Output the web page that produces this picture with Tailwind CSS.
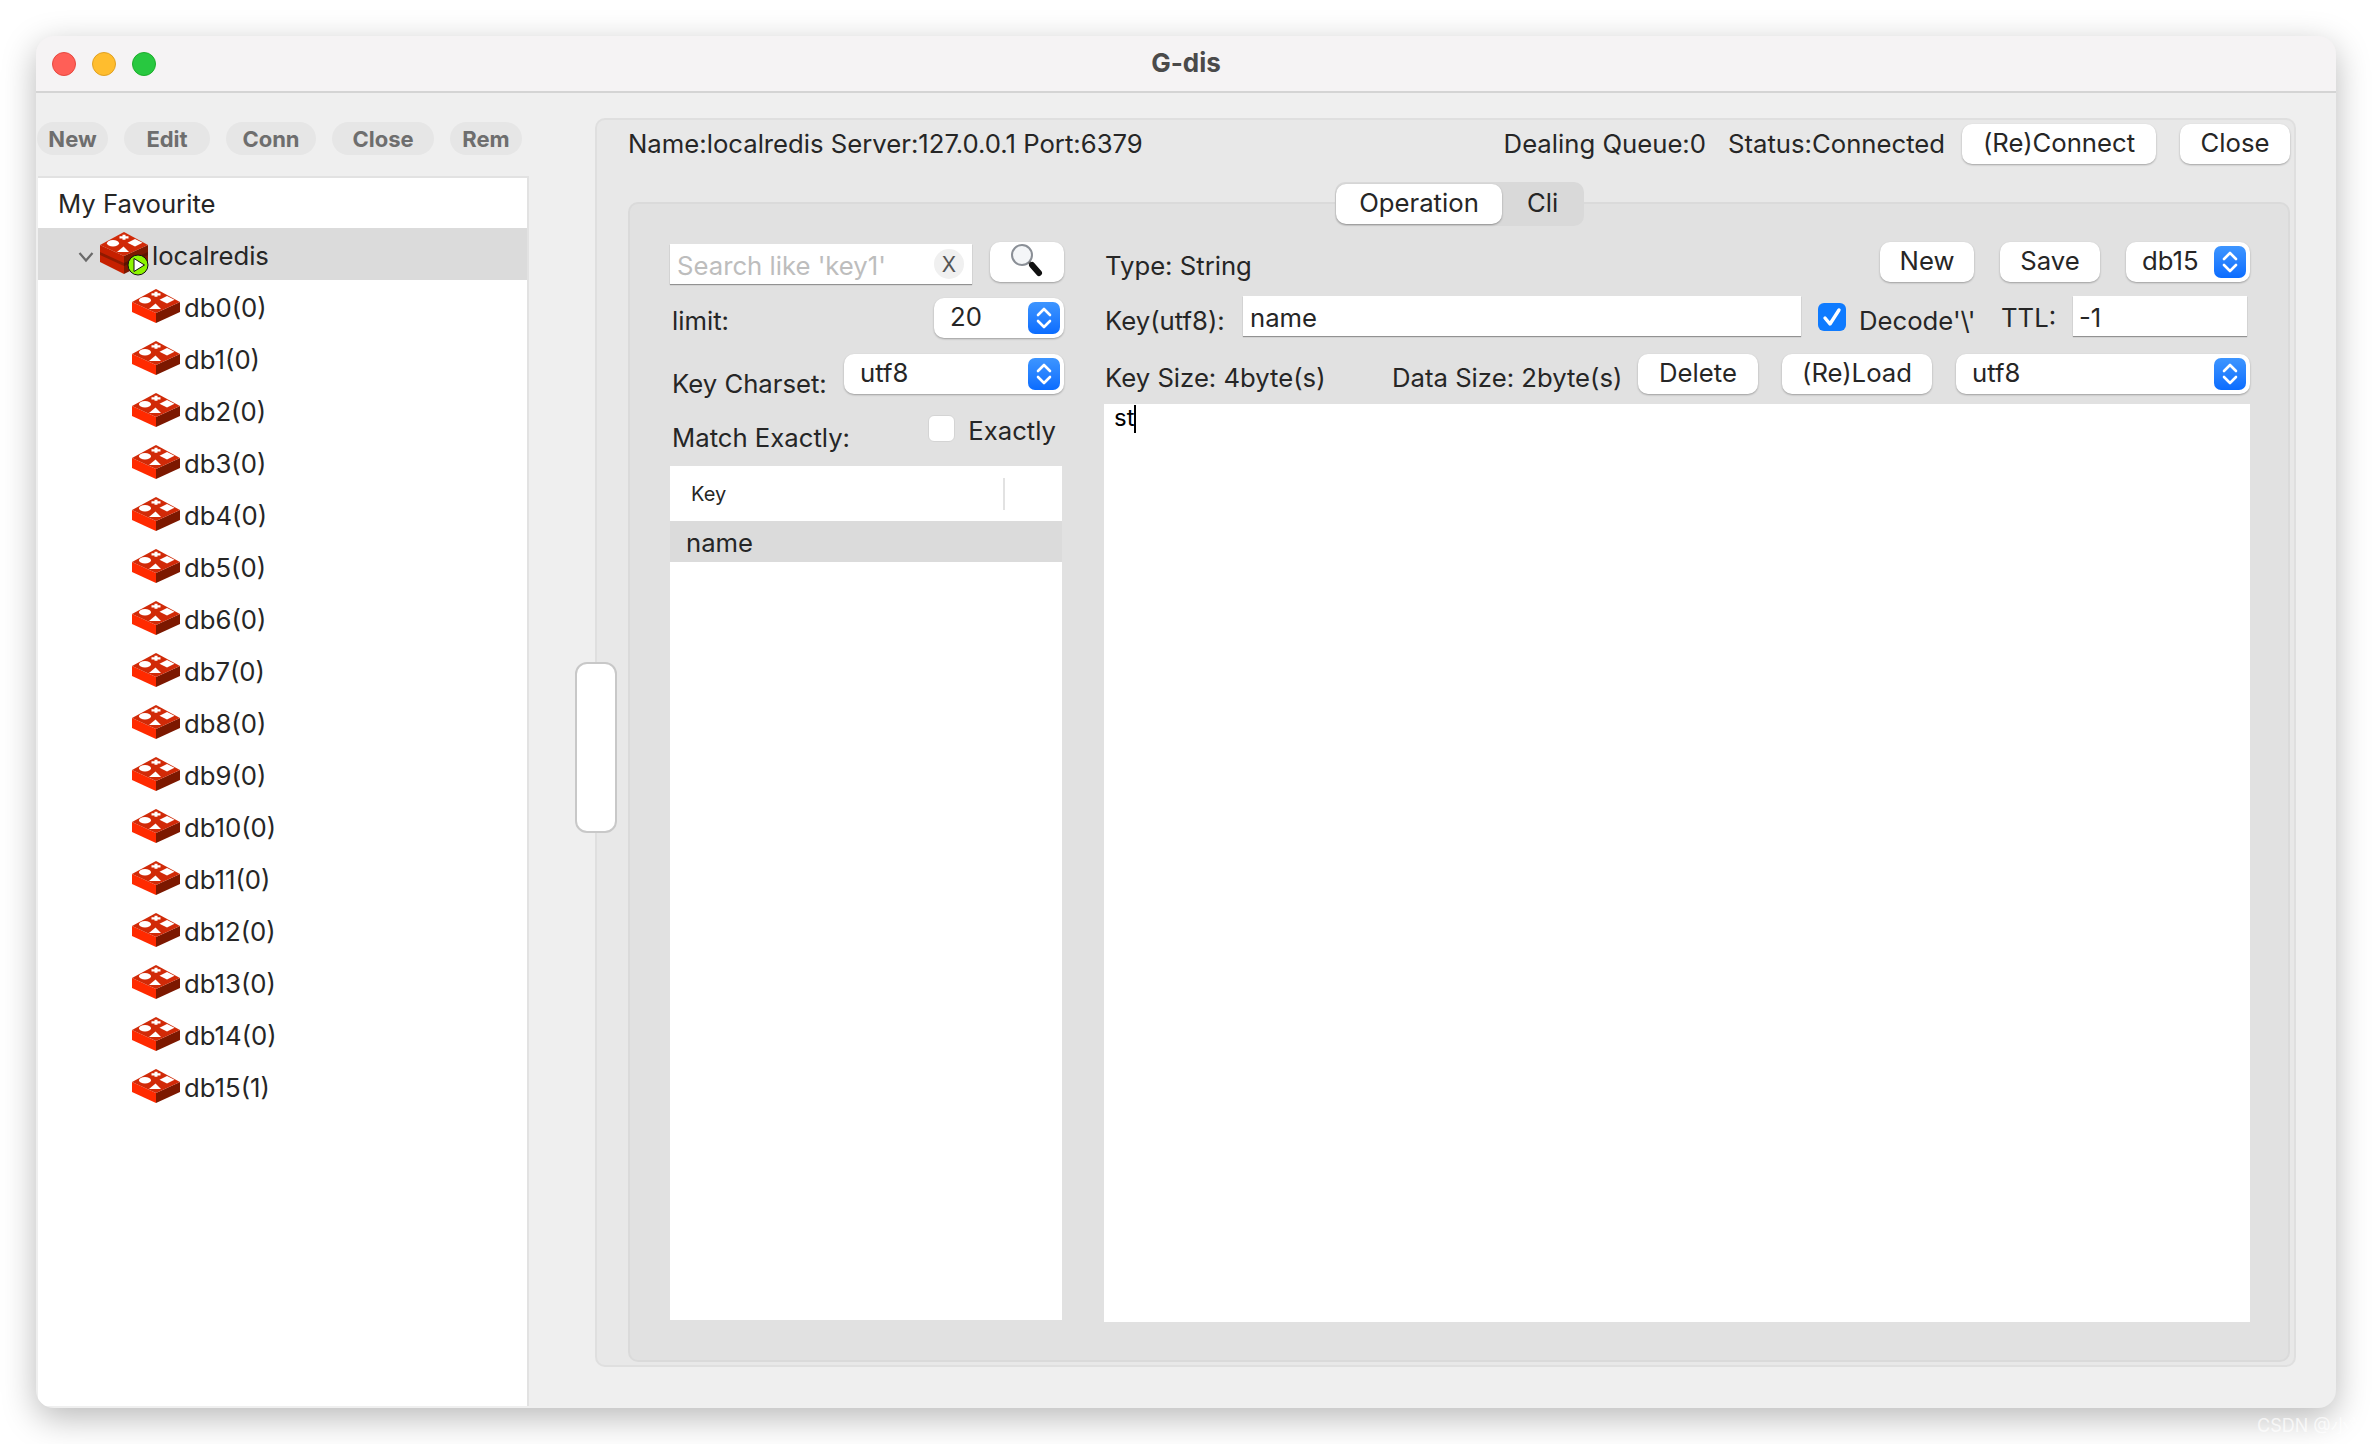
<!DOCTYPE html>
<html lang="en">

<head>
    <meta charset="UTF-8" />
    <title>G-dis</title>
    <script src="https://cdn.jsdelivr.net/npm/@tailwindcss/browser@4"></script>
</head>

<body class="relative h-[1444px] overflow-hidden bg-white p-[36px] font-[Inter,sans-serif] text-[25.7px] leading-none text-[#262626]">
    <!-- shared icons -->
    <svg class="hidden">
        <symbol id="redis-db" viewBox="0 0 48 34">
            <path d="M0 13 L24 24 L24 34 L0 23 Z" fill="#ff2a00" />
            <path d="M48 13 L24 24 L24 34 L48 23 Z" fill="#7c1800" />
            <path d="M24 0 L48 13 L24 24 L0 13 Z" fill="#d12a08" />
            <path d="M22.500 2.800 L25.500 2.800 L25.500 4.200 L28.500 4.200 L28.500 6.400 L25.500 6.400 L25.500 7.800 L22.500 7.800 L22.500 6.400 L19.500 6.400 L19.500 4.200 L22.500 4.200 Z" fill="#fff" />
            <ellipse cx="13" cy="11.300" rx="6" ry="3.200" fill="#fff" />
            <path d="M23.500 14.500 L29 20 L17 20 Z" fill="#fff" />
            <path d="M35 7 L42.500 10.700 L35 14.400 L27.500 10.700 Z" fill="#fff" />
        </symbol>
        <symbol id="stepper" viewBox="0 0 32 32">
            <path d="M10 13 L16 7 L22 13 M10 19 L16 25 L22 19" fill="none" stroke="#fff" stroke-width="2.600" stroke-linecap="round" stroke-linejoin="round" />
        </symbol>
    </svg>

    <div class="flex h-[1372px] w-[2300px] flex-col overflow-hidden rounded-[18px] bg-[#efefef] shadow-[0_10px_34px_rgba(0,0,0,0.28)]">
        <!-- title bar -->
        <div class="relative flex h-[57px] shrink-0 items-center justify-center border-b-2 border-[#d4d4d4] bg-[#f5f3f4]">
            <div class="absolute left-[16px] top-[16px] flex gap-[16px]">
                <span class="size-[24px] rounded-full border border-[#e5483f] bg-[#ff5f57]"></span>
                <span class="size-[24px] rounded-full border border-[#dfa023] bg-[#ffbd2e]"></span>
                <span class="size-[24px] rounded-full border border-[#1dad2b] bg-[#28c840]"></span>
            </div>
            <span class="pb-[1px] text-[26px] font-bold text-[#4a4a4a]">G-dis</span>
        </div>

        <div class="flex min-h-0 flex-1">
            <!-- left column -->
            <div class="flex w-[493px] shrink-0 flex-col">
                <div class="flex gap-[16px] pl-[1px] pt-[29px] text-[22px] font-bold text-[#6e6e6e]">
                    <button class="flex h-[33px] w-[71px] items-center justify-center rounded-full bg-[#e6e6e6]">New</button>
                    <button class="flex h-[33px] w-[86px] items-center justify-center rounded-full bg-[#e6e6e6]">Edit</button>
                    <button class="flex h-[33px] w-[90px] items-center justify-center rounded-full bg-[#e6e6e6]">Conn</button>
                    <button class="flex h-[33px] w-[102px] items-center justify-center rounded-full bg-[#e6e6e6]">Close</button>
                    <button class="flex h-[33px] w-[72px] items-center justify-center rounded-full bg-[#e6e6e6]">Rem</button>
                </div>
                <div class="mb-[2px] ml-[2px] mt-[21px] flex-1 border-r-2 border-t-2 border-[#e2e2e2] bg-white">
                    <div class="flex h-[50px] items-center pl-[20px] pt-[1px]">My Favourite</div>
                    <div class="relative flex h-[52px] items-center bg-[#dbdbdb] pl-[114px] pt-[3px]">
                        <svg class="absolute left-[40px] top-[21px] size-[16px]" viewBox="0 0 16 16"><path d="M1.500 4 L8 11.500 L14.500 4" fill="none" stroke="#6a6a6a" stroke-width="2.200" /></svg>
                        <svg class="absolute left-[62px] top-[4px] h-[42px] w-[48px]" viewBox="0 0 48 42">
                            <path d="M0 13 L24 24 L24 42 L0 30 Z" fill="#c62000" />
                            <path d="M48 13 L24 24 L24 42 L48 30 Z" fill="#7c1800" />
                            <path d="M0 20 L24 31 L24 34 L0 23 Z" fill="#8f1a00" />
                            <path d="M48 20 L24 31 L24 34 L48 23 Z" fill="#5e1200" />
                            <path d="M24 0 L48 13 L24 24 L0 13 Z" fill="#d12a08" />
                            <path d="M22.500 2.800 L25.500 2.800 L25.500 4.200 L28.500 4.200 L28.500 6.400 L25.500 6.400 L25.500 7.800 L22.500 7.800 L22.500 6.400 L19.500 6.400 L19.500 4.200 L22.500 4.200 Z" fill="#fff" />
                            <ellipse cx="13" cy="11.300" rx="6" ry="3.200" fill="#fff" />
                            <path d="M23.500 14.500 L29 20 L17 20 Z" fill="#fff" />
                            <path d="M35 7 L42.500 10.700 L35 14.400 L27.500 10.700 Z" fill="#fff" />
                        </svg>
                        <svg class="absolute left-[89px] top-[26px] size-[22px]" viewBox="0 0 22 22">
                            <circle cx="11" cy="11" r="10" fill="#8cf500" stroke="#111" stroke-width="1" />
                            <path d="M7 4.500 L17.500 11 L7 17.500 Z" fill="#fff" stroke="#111" stroke-width="1" />
                        </svg>
                        localredis
                    </div>
                    <div class="flex h-[52px] items-center gap-[4px] pl-[94px]"><svg class="h-[34px] w-[48px]"><use href="#redis-db" /></svg><span class="mt-[3px]">db0(0)</span></div>
                    <div class="flex h-[52px] items-center gap-[4px] pl-[94px]"><svg class="h-[34px] w-[48px]"><use href="#redis-db" /></svg><span class="mt-[3px]">db1(0)</span></div>
                    <div class="flex h-[52px] items-center gap-[4px] pl-[94px]"><svg class="h-[34px] w-[48px]"><use href="#redis-db" /></svg><span class="mt-[3px]">db2(0)</span></div>
                    <div class="flex h-[52px] items-center gap-[4px] pl-[94px]"><svg class="h-[34px] w-[48px]"><use href="#redis-db" /></svg><span class="mt-[3px]">db3(0)</span></div>
                    <div class="flex h-[52px] items-center gap-[4px] pl-[94px]"><svg class="h-[34px] w-[48px]"><use href="#redis-db" /></svg><span class="mt-[3px]">db4(0)</span></div>
                    <div class="flex h-[52px] items-center gap-[4px] pl-[94px]"><svg class="h-[34px] w-[48px]"><use href="#redis-db" /></svg><span class="mt-[3px]">db5(0)</span></div>
                    <div class="flex h-[52px] items-center gap-[4px] pl-[94px]"><svg class="h-[34px] w-[48px]"><use href="#redis-db" /></svg><span class="mt-[3px]">db6(0)</span></div>
                    <div class="flex h-[52px] items-center gap-[4px] pl-[94px]"><svg class="h-[34px] w-[48px]"><use href="#redis-db" /></svg><span class="mt-[3px]">db7(0)</span></div>
                    <div class="flex h-[52px] items-center gap-[4px] pl-[94px]"><svg class="h-[34px] w-[48px]"><use href="#redis-db" /></svg><span class="mt-[3px]">db8(0)</span></div>
                    <div class="flex h-[52px] items-center gap-[4px] pl-[94px]"><svg class="h-[34px] w-[48px]"><use href="#redis-db" /></svg><span class="mt-[3px]">db9(0)</span></div>
                    <div class="flex h-[52px] items-center gap-[4px] pl-[94px]"><svg class="h-[34px] w-[48px]"><use href="#redis-db" /></svg><span class="mt-[3px]">db10(0)</span></div>
                    <div class="flex h-[52px] items-center gap-[4px] pl-[94px]"><svg class="h-[34px] w-[48px]"><use href="#redis-db" /></svg><span class="mt-[3px]">db11(0)</span></div>
                    <div class="flex h-[52px] items-center gap-[4px] pl-[94px]"><svg class="h-[34px] w-[48px]"><use href="#redis-db" /></svg><span class="mt-[3px]">db12(0)</span></div>
                    <div class="flex h-[52px] items-center gap-[4px] pl-[94px]"><svg class="h-[34px] w-[48px]"><use href="#redis-db" /></svg><span class="mt-[3px]">db13(0)</span></div>
                    <div class="flex h-[52px] items-center gap-[4px] pl-[94px]"><svg class="h-[34px] w-[48px]"><use href="#redis-db" /></svg><span class="mt-[3px]">db14(0)</span></div>
                    <div class="flex h-[52px] items-center gap-[4px] pl-[94px]"><svg class="h-[34px] w-[48px]"><use href="#redis-db" /></svg><span class="mt-[3px]">db15(1)</span></div>
                </div>
            </div>

            <!-- connection panel -->
            <div class="relative ml-[66px] mt-[25px] flex h-[1249px] w-[1701px] flex-col rounded-[10px] border-2 border-[#dfdfdf] bg-[#e8e8e8] pb-[3px] pl-[31px] pr-[4px]">
                <!-- splitter handle -->
                <div class="absolute left-[-22px] top-[542px] h-[171px] w-[42px] rounded-[12px] border-2 border-[#c8c8c8] bg-white"></div>

                <div class="flex h-[82px] shrink-0 items-start pt-[4px]">
                    <span class="mt-[7px]">Name:localredis Server:127.0.0.1 Port:6379</span>
                    <span class="ml-auto mt-[7px]">Dealing Queue:0</span>
                    <span class="ml-[22px] mt-[7px]">Status:Connected</span>
                    <button class="ml-[17px] h-[40px] w-[194px] rounded-[10px] bg-white pb-[3px] shadow-[0_1px_2px_rgba(0,0,0,0.3)]">(Re)Connect</button>
                    <button class="ml-[24px] h-[40px] w-[110px] rounded-[10px] bg-white pb-[3px] shadow-[0_1px_2px_rgba(0,0,0,0.3)]">Close</button>
                </div>

                <!-- tab body -->
                <div class="relative flex min-h-0 flex-1 gap-[40px] rounded-[10px] border-2 border-[#dadada] bg-[#e1e1e1] pl-[40px] pt-[38px]">
                    <!-- tabs -->
                    <div class="absolute left-[705px] top-[-22px] flex h-[44px] w-[249px] items-center rounded-[10px] bg-[#d9d9d9] pl-[1px]">
                        <span class="flex h-[40px] w-[166px] items-center justify-center rounded-[10px] bg-white pb-[2px] shadow-[0_1px_2px_rgba(0,0,0,0.35)]">Operation</span>
                        <span class="mb-[2px] ml-[25px]">Cli</span>
                    </div>

                    <!-- key list column -->
                    <div class="flex w-[394px] shrink-0 flex-col">
                        <div class="flex h-[42px] items-start justify-between">
                            <div class="relative mt-[2px] flex h-[40px] w-[302px] items-center bg-white pl-[7px] pt-[4px] text-[#bdbdbd] shadow-[0_1px_1px_rgba(0,0,0,0.35)]">
                                Search like 'key1'
                                <span class="absolute right-[8px] top-[5px] flex size-[30px] items-center justify-center rounded-full bg-[#f0f0f0] text-[21px] text-[#555]">X</span>
                            </div>
                            <button class="flex h-[40px] w-[74px] items-center justify-center rounded-[10px] bg-white shadow-[0_1px_2px_rgba(0,0,0,0.3)]">
                                <svg class="mb-[4px] mr-[2px] size-[36px]" viewBox="0 0 36 36">
                                    <circle cx="14" cy="13" r="10" fill="#f4f6f8" stroke="#8a8f96" stroke-width="2" />
                                    <path d="M21 20 L24 23" stroke="#666" stroke-width="3" />
                                    <path d="M24 23 L31 31" stroke="#111" stroke-width="6" stroke-linecap="round" />
                                </svg>
                            </button>
                        </div>
                        <div class="mt-[14px] flex h-[40px] items-start justify-between">
                            <span class="ml-[2px] mt-[10px]">limit:</span>
                            <div class="relative flex h-[40px] w-[130px] items-center rounded-[10px] bg-white pb-[3px] pl-[16px] shadow-[0_1px_2px_rgba(0,0,0,0.3)]">
                                20
                                <svg class="absolute right-[4px] top-[4px] size-[32px] rounded-[7px] bg-gradient-to-b from-[#3d95ff] to-[#0a6cff]"><use href="#stepper" /></svg>
                            </div>
                        </div>
                        <div class="mt-[16px] flex h-[40px] items-start justify-between">
                            <span class="ml-[2px] mt-[17px]">Key Charset:</span>
                            <div class="relative flex h-[40px] w-[220px] items-center rounded-[10px] bg-white pb-[3px] pl-[16px] shadow-[0_1px_2px_rgba(0,0,0,0.3)]">
                                utf8
                                <svg class="absolute right-[4px] top-[4px] size-[32px] rounded-[7px] bg-gradient-to-b from-[#3d95ff] to-[#0a6cff]"><use href="#stepper" /></svg>
                            </div>
                        </div>
                        <div class="mt-[21px] flex h-[27px] items-start">
                            <span class="ml-[2px] mt-[10px]">Match Exactly:</span>
                            <span class="ml-auto size-[27px] rounded-[6px] border border-[#d4d4d4] bg-white"></span>
                            <span class="ml-[13px] mr-[8px] mt-[3px]">Exactly</span>
                        </div>
                        <div class="mb-[40px] mt-[24px] flex w-[392px] flex-1 flex-col bg-white">
                            <div class="relative flex h-[55px] shrink-0 items-center pl-[21px] text-[20px]">
                                Key
                                <span class="absolute left-[333px] top-[12px] h-[32px] w-[2px] bg-[#e2e2e2]"></span>
                            </div>
                            <div class="flex h-[41px] items-center bg-[#dbdbdb] pl-[16px] pt-[3px]">name</div>
                        </div>
                    </div>

                    <!-- value column -->
                    <div class="flex w-[1146px] shrink-0 flex-col">
                        <div class="flex h-[40px] items-start">
                            <span class="ml-[1px] mt-[11px]">Type: String</span>
                            <button class="ml-auto h-[40px] w-[94px] rounded-[10px] bg-white pb-[3px] shadow-[0_1px_2px_rgba(0,0,0,0.3)]">New</button>
                            <button class="ml-[26px] h-[40px] w-[100px] rounded-[10px] bg-white pb-[3px] shadow-[0_1px_2px_rgba(0,0,0,0.3)]">Save</button>
                            <div class="relative ml-[26px] flex h-[40px] w-[124px] items-center rounded-[10px] bg-white pb-[3px] pl-[16px] shadow-[0_1px_2px_rgba(0,0,0,0.3)]">
                                db15
                                <svg class="absolute right-[4px] top-[4px] size-[32px] rounded-[7px] bg-gradient-to-b from-[#3d95ff] to-[#0a6cff]"><use href="#stepper" /></svg>
                            </div>
                        </div>
                        <div class="mt-[14px] flex h-[40px] items-start">
                            <span class="ml-[1px] mt-[12px] w-[138px]">Key(utf8):</span>
                            <div class="flex h-[40px] w-[558px] items-center bg-white pl-[7px] pt-[4px] shadow-[0_1px_1px_rgba(0,0,0,0.35)]">name</div>
                            <svg class="ml-[17px] mt-[7px] size-[28px] rounded-[6px] bg-[#0f7bff]" viewBox="0 0 28 28"><path d="M7 15 L12 21 L21 7" fill="none" stroke="#fff" stroke-width="3.400" stroke-linecap="round" stroke-linejoin="round" /></svg>
                            <span class="ml-[13px] mt-[12px] w-[142px]">Decode'\'</span>
                            <span class="mt-[9px] w-[72px]">TTL:</span>
                            <div class="flex h-[40px] w-[174px] items-center bg-white pl-[6px] pt-[4px] shadow-[0_1px_1px_rgba(0,0,0,0.35)]">-1</div>
                        </div>
                        <div class="mt-[18px] flex h-[40px] items-start">
                            <span class="ml-[1px] mt-[11px] w-[287px]">Key Size: 4byte(s)</span>
                            <span class="mt-[11px]">Data Size: 2byte(s)</span>
                            <button class="ml-auto h-[40px] w-[120px] rounded-[10px] bg-white pb-[3px] shadow-[0_1px_2px_rgba(0,0,0,0.3)]">Delete</button>
                            <button class="ml-[24px] h-[40px] w-[150px] rounded-[10px] bg-white pb-[3px] shadow-[0_1px_2px_rgba(0,0,0,0.3)]">(Re)Load</button>
                            <div class="relative ml-[24px] flex h-[40px] w-[294px] items-center rounded-[10px] bg-white pb-[3px] pl-[16px] shadow-[0_1px_2px_rgba(0,0,0,0.3)]">
                                utf8
                                <svg class="absolute right-[4px] top-[4px] size-[32px] rounded-[7px] bg-gradient-to-b from-[#3d95ff] to-[#0a6cff]"><use href="#stepper" /></svg>
                            </div>
                        </div>
                        <div class="mb-[38px] mt-[10px] flex flex-1 items-start bg-white pl-[10px] pt-[1px] font-[&quot;Liberation_Sans&quot;,sans-serif] text-[24px] leading-[26px] text-black">
                            st<span class="ml-[-1px] h-[28px] w-[2px] bg-black"></span>
                        </div>
                    </div>
                </div>
            </div>
        </div>
    </div>

    <span class="absolute left-[2257px] top-[1417px] font-[&quot;Noto_Sans_CJK_SC&quot;,sans-serif] text-[18px] text-white/70">CSDN @小刘</span>
</body>

</html>
